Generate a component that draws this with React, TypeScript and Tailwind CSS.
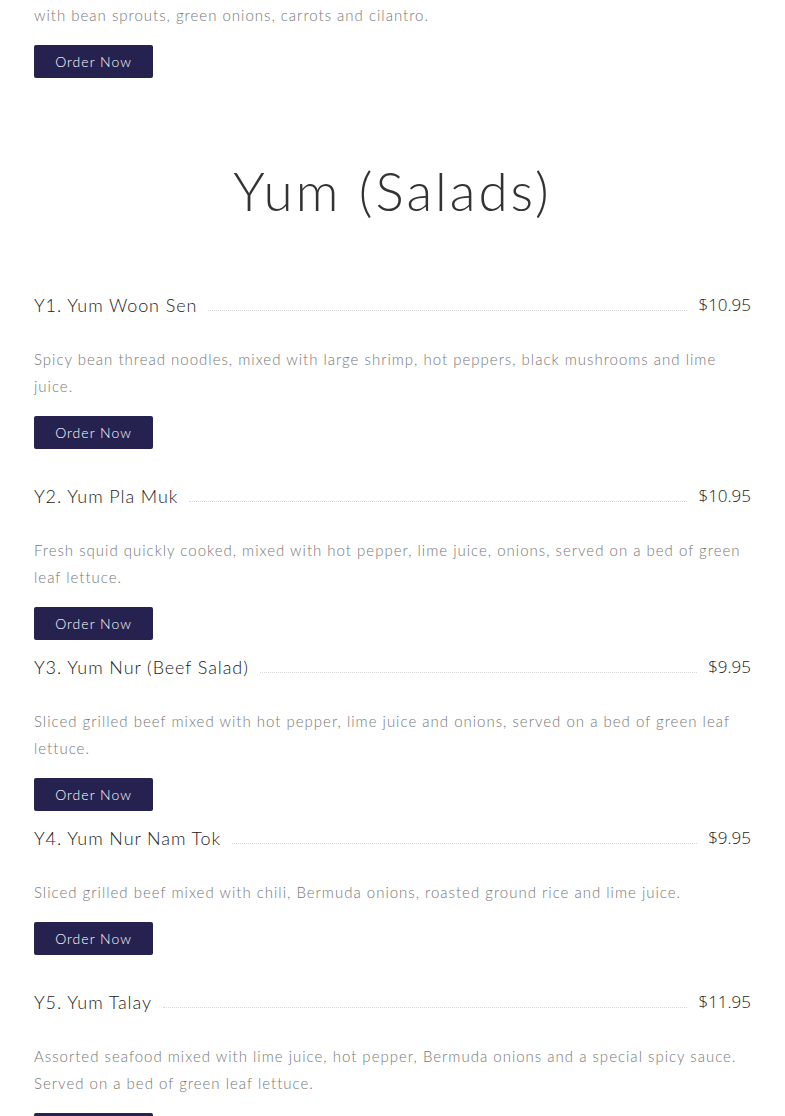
import React from 'react';

type Item = {
  code: string;
  name: string;
  price: string;
  desc: string;
  gap: string;
};

const items: Item[] = [
  {
    code: 'Y1.',
    name: 'Yum Woon Sen',
    price: '$10.95',
    desc: 'Spicy bean thread noodles, mixed with large shrimp, hot peppers, black mushrooms and lime juice.',
    gap: 'mb-[32px]',
  },
  {
    code: 'Y2.',
    name: 'Yum Pla Muk',
    price: '$10.95',
    desc: 'Fresh squid quickly cooked, mixed with hot pepper, lime juice, onions, served on a bed of green leaf lettuce.',
    gap: 'mb-[12px]',
  },
  {
    code: 'Y3.',
    name: 'Yum Nur (Beef Salad)',
    price: '$9.95',
    desc: 'Sliced grilled beef mixed with hot pepper, lime juice and onions, served on a bed of green leaf lettuce.',
    gap: 'mb-[12px]',
  },
  {
    code: 'Y4.',
    name: 'Yum Nur Nam Tok',
    price: '$9.95',
    desc: 'Sliced grilled beef mixed with chili, Bermuda onions, roasted ground rice and lime juice.',
    gap: 'mb-[32px]',
  },
  {
    code: 'Y5.',
    name: 'Yum Talay',
    price: '$11.95',
    desc: 'Assorted seafood mixed with lime juice, hot pepper, Bermuda onions and a special spicy sauce. Served on a bed of green leaf lettuce.',
    gap: 'mb-[32px]',
  },
];

const OrderButton: React.FC = () => (
  <button className="mt-[16.5px] h-[33px] w-[119px] rounded-[2px] bg-[#26224f] text-[14px] font-light tracking-[1px] text-white">
    Order Now
  </button>
);

const MenuItem: React.FC<{ item: Item }> = ({ item }) => (
  <div className={item.gap}>
    <div className="flex h-[30px] items-center">
      <h3 className="shrink-0 text-[18px] font-light tracking-[0.9px] text-[#222]">
        {item.code} {item.name}
      </h3>
      <div className="mx-[11px] mt-[10px] flex-1 border-b border-dotted border-[#d6d6d6]" />
      <span className="shrink-0 font-['Open_Sans',sans-serif] text-[17px] font-light text-[#222]">
        {item.price}
      </span>
    </div>
    <p className="mt-[25.5px] text-[15px] leading-[27px] tracking-[1px] text-[#777]">
      {item.desc}
    </p>
    <OrderButton />
  </div>
);

const App: React.FC = () => {
  return (
    <div className="min-h-screen bg-white px-[34px] font-['Lato',sans-serif] font-light">
      {/* tail of previous section */}
      <p className="pt-[1.5px] text-[15px] leading-[27px] tracking-[1px] text-[#777]">
        with bean sprouts, green onions, carrots and cilantro.
      </p>
      <OrderButton />

      <h2 className="mt-[82px] text-center text-[53px] font-light leading-[62px] tracking-[3px] text-[#333]">
        Yum (Salads)
      </h2>

      <div className="mt-[68px]">
        {items.map((item) => (
          <MenuItem key={item.code} item={item} />
        ))}
      </div>
    </div>
  );
};

export default App;
